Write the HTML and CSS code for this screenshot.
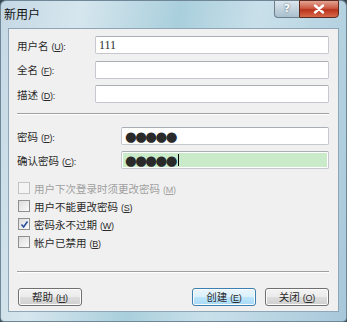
FILE: index.html
```html
<!DOCTYPE html>
<html lang="zh-CN">
<head>
    <meta charset="UTF-8">
    <title>新用户</title>
    <link rel="stylesheet" href="styles.css">
</head>
<body>
    <div class="window">
        <div class="titlebar">
            <span class="title">新用户</span>
            <div class="caption-btns">
                <span class="cap-help">?</span>
                <span class="cap-close">
                    <svg width="12" height="10" viewBox="0 0 12 10"><path d="M2 1.5 L10 8.5 M10 1.5 L2 8.5" stroke="#fff" stroke-width="2.4" stroke-linecap="round"/></svg>
                </span>
            </div>
        </div>

        <div class="client">
            <div class="form-grid top-grid">
                <label>用户名 <span class="key">(<u>U</u>):</span></label>
                <div class="field">111</div>
                <label>全名 <span class="key">(<u>F</u>):</span></label>
                <div class="field"></div>
                <label>描述 <span class="key">(<u>D</u>):</span></label>
                <div class="field"></div>
            </div>

            <div class="sep"></div>

            <div class="form-grid pw-grid">
                <label>密码 <span class="key">(<u>P</u>):</span></label>
                <div class="field dots">●●●●●</div>
                <label>确认密码 <span class="key">(<u>C</u>):</span></label>
                <div class="field dots active">●●●●●<span class="caret"></span></div>
            </div>

            <div class="checks">
                <div class="check disabled">
                    <span class="box"></span>
                    <span>用户下次登录时须更改密码 <span class="key">(<u>M</u>)</span></span>
                </div>
                <div class="check">
                    <span class="box"></span>
                    <span>用户不能更改密码 <span class="key">(<u>S</u>)</span></span>
                </div>
                <div class="check">
                    <span class="box checked">
                        <svg width="9" height="9" viewBox="0 0 9 9"><path d="M1.5 4.5 L3.6 7 L7.5 1.5" fill="none" stroke="#2a4f9e" stroke-width="1.6"/></svg>
                    </span>
                    <span>密码永不过期 <span class="key">(<u>W</u>)</span></span>
                </div>
                <div class="check">
                    <span class="box"></span>
                    <span>帐户已禁用 <span class="key">(<u>B</u>)</span></span>
                </div>
            </div>

            <div class="sep bottom-sep"></div>

            <div class="buttons">
                <button class="btn">帮助 <span class="key">(<u>H</u>)</span></button>
                <div class="right-btns">
                    <button class="btn default">创建 <span class="key">(<u>E</u>)</span></button>
                    <button class="btn">关闭 <span class="key">(<u>O</u>)</span></button>
                </div>
            </div>
        </div>
    </div>
</body>
</html>
```

FILE: styles.css
```css
* {
    margin: 0;
    padding: 0;
    box-sizing: border-box;
}

body {
    background: #3a4a55;
    font-family: "Liberation Sans", "Noto Sans CJK SC", sans-serif;
    font-size: 10.5px;
    color: #2a2a2a;
}

.window {
    width: 347px;
    height: 322px;
    padding: 0 7px 9px 7px;
    border-radius: 6px 6px 4px 4px;
    background: linear-gradient(100deg, #c4d8e4 0%, #d6e6ee 20%, #a9cfdc 45%, #c9e0ea 65%, #a7c8da 100%);
    border: 1px solid #6f8796;
    display: flex;
    flex-direction: column;
}

.titlebar {
    height: 27px;
    display: flex;
    justify-content: space-between;
    align-items: flex-start;
    margin-left: -4px;
}

.title {
    margin-top: 4px;
    font-size: 12px;
    color: #111;
}

.caption-btns {
    display: flex;
    margin-top: -1px;
}

.cap-help {
    width: 25px;
    height: 18px;
    border: 1px solid #6e7f8a;
    border-right: none;
    border-radius: 0 0 0 4px;
    background: linear-gradient(#dbe6ee, #a9bfcd);
    color: #fff;
    font-family: "DejaVu Sans", sans-serif;
    font-weight: bold;
    font-size: 11px;
    text-align: center;
    line-height: 16px;
    text-shadow: 0 0 2px #3c5060;
}

.cap-close {
    width: 40px;
    height: 18px;
    border: 1px solid #5a2a22;
    border-radius: 0 0 4px 0;
    background: linear-gradient(#e2a493, #cc5a43 45%, #b8321c 55%, #d66a4a);
    display: flex;
    align-items: center;
    justify-content: center;
}

.client {
    flex: 1;
    background: #f0f0f0;
    border: 1px solid #8ea6b6;
    padding: 7px 9px 0 8px;
}

.key {
    font-size: 9px;
    letter-spacing: -0.2px;
}

.form-grid {
    display: grid;
    row-gap: 6.5px;
    align-items: center;
}

.top-grid {
    grid-template-columns: 78px 1fr;
}

.pw-grid {
    grid-template-columns: 104px 1fr;
    margin-top: 12px;
    row-gap: 6px;
}

.form-grid label {
    white-space: nowrap;
}

.field {
    height: 18px;
    background: #fff;
    border: 1px solid #c5c9cf;
    border-top-color: #a9adb4;
    border-radius: 2px;
    padding-left: 3px;
    font-family: "Liberation Serif", serif;
    font-size: 12px;
    line-height: 16px;
}

.dots {
    font-family: "DejaVu Sans", sans-serif;
    font-size: 13.5px;
    letter-spacing: -1.6px;
    line-height: 15px;
    display: flex;
    align-items: center;
}

.active {
    background: #c9ebc9;
    box-shadow: inset 0 0 0 1px #fff;
}

.caret {
    display: inline-block;
    width: 1px;
    height: 12px;
    background: #000;
    margin-left: 2px;
}

.sep {
    height: 2px;
    border-top: 1px solid #a0a0a0;
    border-bottom: 1px solid #fff;
    margin-top: 10px;
}

.checks {
    margin-top: 10px;
    display: flex;
    flex-direction: column;
}

.check {
    height: 18px;
    display: flex;
    align-items: center;
    gap: 4px;
    padding-left: 1px;
    white-space: nowrap;
}

.check.disabled {
    color: #a0a0a0;
}

.box {
    width: 12px;
    height: 12px;
    border: 1px solid #8e8f8f;
    background: linear-gradient(135deg, #dcdcdc, #fbfbfb);
    display: flex;
    align-items: center;
    justify-content: center;
}

.disabled .box {
    border-color: #c4c4c4;
    background: #f4f4f4;
}

.bottom-sep {
    margin-top: 20px;
}

.buttons {
    margin-top: 15px;
    display: flex;
    justify-content: space-between;
    padding-left: 1px;
}

.right-btns {
    display: flex;
    gap: 9px;
}

.btn {
    width: 64px;
    height: 18px;
    font-family: "Liberation Sans", "Noto Sans CJK SC", sans-serif;
    font-size: 10.5px;
    line-height: 14px;
    color: #2a2a2a;
    border: 1px solid #707070;
    border-radius: 3px;
    background: linear-gradient(#f3f3f3 0%, #ebebeb 50%, #dddddd 51%, #cfcfcf 100%);
    box-shadow: inset 0 0 0 1px #fcfcfc;
}

.btn.default {
    border-color: #3c7fb1;
    background: linear-gradient(#eaf6fd 0%, #d9f0fc 50%, #bee6fd 51%, #a7d9f5 100%);
}
```
